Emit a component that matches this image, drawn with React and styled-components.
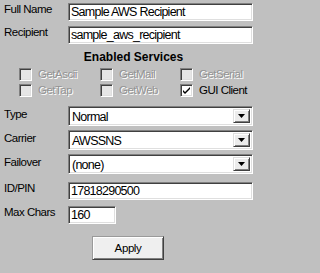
import React from 'react';
import styled, { createGlobalStyle } from 'styled-components';

const GlobalStyle = createGlobalStyle`
  html, body {
    margin: 0;
    padding: 0;
    background: #c0c0c0;
  }
  body {
    font-family: "Liberation Sans", Arial, sans-serif;
  }
`;

const Panel = styled.div`
  box-sizing: border-box;
  width: 263px;
  height: 273px;
  padding: 3px 0 0 4px;
  display: flex;
  flex-direction: column;
  background: #c0c0c0;
`;

const Row = styled.div`
  display: grid;
  grid-template-columns: 64px auto;
  align-items: start;
  margin-top: ${p => p.$top || 0}px;
`;

const Label = styled.label`
  padding-top: ${p => p.$drop || 0}px;
  font-size: 11.5px;
  line-height: 12px;
  letter-spacing: -0.5px;
  color: #000;
  white-space: nowrap;
`;

const sunken = `
  box-sizing: border-box;
  border-style: solid;
  border-width: 1px;
  border-color: #808080 #ffffff #ffffff #808080;
  box-shadow: inset 1px 1px 0 #404040, inset -1px -1px 0 #dfdfdf;
`;

const TextBox = styled.input`
  ${sunken}
  width: ${p => p.$width || 185}px;
  height: 18px;
  margin: 0;
  padding: 0 0 0 2px;
  background: #fff;
  font-family: "Liberation Sans", Arial, sans-serif;
  font-size: 12.5px;
  letter-spacing: -0.75px;
  line-height: 14px;
  color: #000;
  outline: none;
`;

const Select = styled.div`
  ${sunken}
  width: 185px;
  height: 20px;
  padding: 2px;
  display: flex;
  align-items: stretch;
  background: #fff;
`;

const SelectValue = styled.span`
  flex: 1;
  padding-left: 1px;
  font-size: 12.5px;
  line-height: 16px;
  letter-spacing: -0.75px;
  color: #000;
`;

const DropButton = styled.span`
  box-sizing: border-box;
  width: 17px;
  display: flex;
  align-items: center;
  justify-content: center;
  background: #ececec;
  border-style: solid;
  border-width: 1px;
  border-color: #dfdfdf #404040 #404040 #dfdfdf;
  box-shadow: inset 1px 1px 0 #fff, inset -1px -1px 0 #808080;
`;

const Heading = styled.div`
  margin-top: 6px;
  text-align: center;
  font-size: 12px;
  font-weight: bold;
  line-height: 14px;
  color: #000;
`;

const ServiceGrid = styled.div`
  margin-top: 4px;
  padding-left: 15px;
  display: grid;
  grid-template-columns: 81px 80px auto;
  row-gap: 3px;
`;

const Service = styled.div`
  display: flex;
  align-items: center;
  gap: 6px;
  height: 13px;
`;

const Box = styled.span`
  ${sunken}
  width: 13px;
  height: 13px;
  flex: none;
  display: flex;
  align-items: center;
  justify-content: center;
  background: ${p => (p.$disabled ? '#e6e6e6' : '#fff')};
`;

const ServiceText = styled.span`
  font-size: 11.5px;
  line-height: 13px;
  letter-spacing: -0.5px;
  white-space: nowrap;
  color: ${p => (p.$disabled ? '#949494' : '#000')};
  text-shadow: ${p => (p.$disabled ? '1px 1px 0 #fff' : 'none')};
`;

const ApplyButton = styled.button`
  box-sizing: border-box;
  margin: 12px 0 0 88px;
  width: 72px;
  height: 24px;
  padding: 0;
  background: #efefef;
  border-style: solid;
  border-width: 1px;
  border-color: #9a9a9a #404040 #404040 #9a9a9a;
  box-shadow: inset 1px 1px 0 #fff, inset -1px -1px 0 #808080;
  font-family: "Liberation Sans", Arial, sans-serif;
  font-size: 11.5px;
  letter-spacing: -0.4px;
  color: #000;
`;

const Arrow = () => (
  <svg width="7" height="4" viewBox="0 0 7 4">
    <path d="M0 0h7L3.5 4z" fill="#000" />
  </svg>
);

const Check = () => (
  <svg width="9" height="9" viewBox="0 0 9 9">
    <path d="M1 4l2 2 5-5v2L3 8 1 6z" fill="#000" />
  </svg>
);

const services = [
  { name: 'GetAscii' },
  { name: 'GetMail' },
  { name: 'GetSerial' },
  { name: 'GetTap' },
  { name: 'GetWeb' },
  { name: 'GUI Client', enabled: true, checked: true },
];

const Dropdown = ({ value }) => (
  <Select>
    <SelectValue>{value}</SelectValue>
    <DropButton>
      <Arrow />
    </DropButton>
  </Select>
);

export default function App() {
  return (
    <>
      <GlobalStyle />
      <Panel>
        <Row>
          <Label>Full Name</Label>
          <TextBox defaultValue="Sample AWS Recipient" />
        </Row>
        <Row $top={5}>
          <Label>Recipient</Label>
          <TextBox defaultValue="sample_aws_recipient" />
        </Row>

        <Heading>Enabled Services</Heading>
        <ServiceGrid>
          {services.map(s => (
            <Service key={s.name}>
              <Box $disabled={!s.enabled}>{s.checked && <Check />}</Box>
              <ServiceText $disabled={!s.enabled}>{s.name}</ServiceText>
            </Service>
          ))}
        </ServiceGrid>

        <Row $top={9}>
          <Label $drop={2}>Type</Label>
          <Dropdown value="Normal" />
        </Row>
        <Row $top={4}>
          <Label $drop={2}>Carrier</Label>
          <Dropdown value="AWSSNS" />
        </Row>
        <Row $top={4}>
          <Label $drop={2}>Failover</Label>
          <Dropdown value="(none)" />
        </Row>

        <Row $top={8}>
          <Label>ID/PIN</Label>
          <TextBox defaultValue="17818290500" />
        </Row>
        <Row $top={6}>
          <Label>Max Chars</Label>
          <TextBox $width={48} defaultValue="160" />
        </Row>

        <div>
          <ApplyButton>Apply</ApplyButton>
        </div>
      </Panel>
    </>
  );
}
